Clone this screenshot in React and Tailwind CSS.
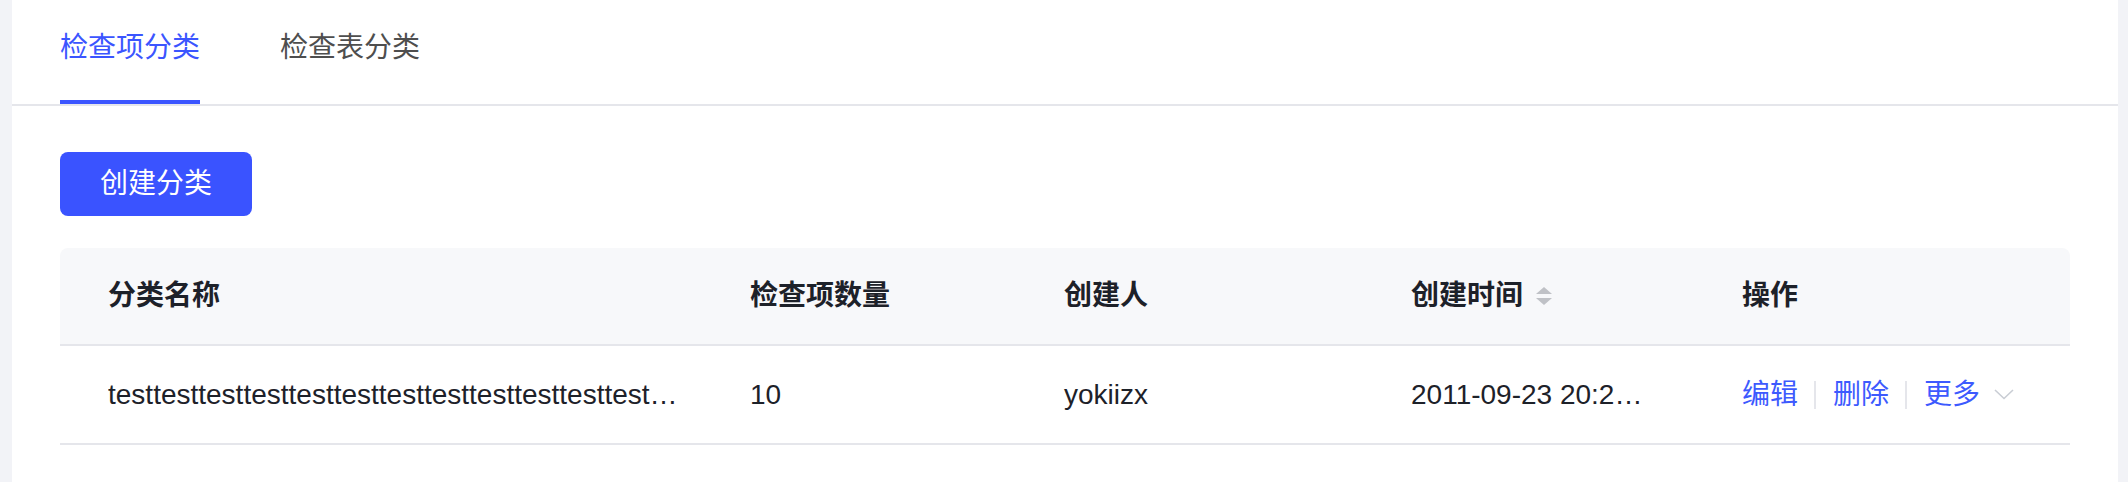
import { useState } from 'react';

const tabs = ['检查项分类', '检查表分类'];

const rows = [
  {
    name: 'testtesttesttesttesttesttesttesttesttesttesttesttesttesttesttest',
    count: 10,
    creator: 'yokiizx',
    createdAt: '2011-09-23 20:20:20',
  },
];

function SortIcon() {
  return (
    <svg width="16" height="18" viewBox="0 0 16 18" className="ml-[13px]">
      <path d="M8 0 L16 7 L0 7 Z" fill="#bfc1c6" />
      <path d="M0 11 L16 11 L8 18 Z" fill="#bfc1c6" />
    </svg>
  );
}

function Chevron() {
  return (
    <svg width="20" height="11" viewBox="0 0 20 11" className="ml-[14px]">
      <path d="M1 1 L10 9.5 L19 1" fill="none" stroke="#c9cdd4" strokeWidth="1.6" />
    </svg>
  );
}

function Sep() {
  return <span className="ml-[16px] mr-[17px] w-[2px] h-[28px] bg-[#e5e6eb]" />;
}

export default function App() {
  const [active, setActive] = useState(0);

  return (
    <div className="min-h-[482px] bg-[#f2f3f7] pl-[12px] pr-[10px] font-['Liberation_Sans','Noto_Sans_CJK_SC',sans-serif]">
      <div className="bg-white min-h-[482px] flex flex-col">
        {/* tabs */}
        <div className="flex gap-[80px] px-[48px] border-b-2 border-[#e5e6eb]">
          {tabs.map((t, i) => (
            <button
              key={t}
              onClick={() => setActive(i)}
              className={`relative h-[104px] flex items-center text-[28px] leading-[40px] pb-[8px] ${
                i === active ? 'text-[#3b55ff]' : 'text-[#4e4e4e]'
              }`}
            >
              {t}
              {i === active && <span className="absolute left-0 right-0 bottom-0 h-[4px] bg-[#3b55ff]" />}
            </button>
          ))}
        </div>

        <div className="px-[48px] pt-[46px]">
          <button className="h-[64px] px-[40px] rounded-[8px] bg-[#3a53ff] text-white text-[28px] leading-[40px]">
            创建分类
          </button>

          {/* table */}
          <div className="mt-[32px] text-[28px] leading-[40px] text-[#1d2129]">
            <div className="grid grid-cols-[642px_314px_347px_331px_1fr] pl-[48px] h-[98px] items-center bg-[#f7f8fa] rounded-t-[8px] border-b-2 border-[#e5e6eb] font-bold">
              <div>分类名称</div>
              <div>检查项数量</div>
              <div>创建人</div>
              <div className="flex items-center">
                创建时间
                <SortIcon />
              </div>
              <div>操作</div>
            </div>
            {rows.map((r) => (
              <div
                key={r.name}
                className="grid grid-cols-[642px_314px_347px_331px_1fr] pl-[48px] h-[99px] items-center border-b-2 border-[#e5e6eb]"
              >
                <div className="w-[573px] truncate">{r.name}</div>
                <div>{r.count}</div>
                <div>{r.creator}</div>
                <div className="w-[240px] truncate">{r.createdAt}</div>
                <div className="flex items-center text-[#3d5afe]">
                  <span>编辑</span>
                  <Sep />
                  <span>删除</span>
                  <Sep />
                  <span>更多</span>
                  <Chevron />
                </div>
              </div>
            ))}
          </div>
        </div>
      </div>
    </div>
  );
}
